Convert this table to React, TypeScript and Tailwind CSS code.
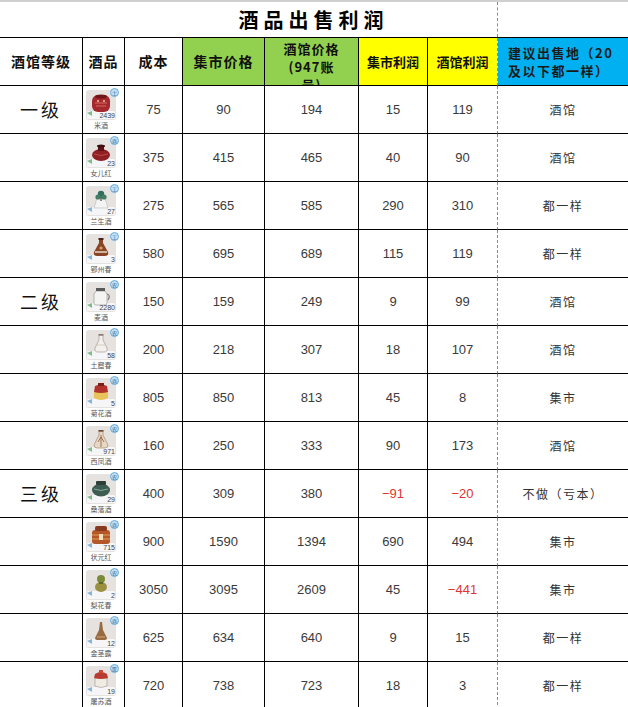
import React from 'react'

type Item = {
  grade?: string
  name: string
  count: string
  badge: string
  tab: 'g' | 'b'
  kind: string
  cost: string
  market: string
  tavern: string
  mProfit: string
  tProfit: string
  advice: string
}

const ROWS: Item[] = [
  { grade: '一级', name: '米酒', count: '2439', badge: '士', tab: 'g', kind: 'rice', cost: '75', market: '90', tavern: '194', mProfit: '15', tProfit: '119', advice: '酒馆' },
  { name: '女儿红', count: '23', badge: '商', tab: 'g', kind: 'pot', cost: '375', market: '415', tavern: '465', mProfit: '40', tProfit: '90', advice: '酒馆' },
  { name: '兰生酒', count: '27', badge: '工', tab: 'b', kind: 'tree', cost: '275', market: '565', tavern: '585', mProfit: '290', tProfit: '310', advice: '都一样' },
  { name: '郢州春', count: '3', badge: '工', tab: 'b', kind: 'vase', cost: '580', market: '695', tavern: '689', mProfit: '115', tProfit: '119', advice: '都一样' },
  { grade: '二级', name: '麦酒', count: '2280', badge: '农', tab: 'g', kind: 'jug', cost: '150', market: '159', tavern: '249', mProfit: '9', tProfit: '99', advice: '酒馆' },
  { name: '土窟春', count: '58', badge: '农', tab: 'g', kind: 'flask', cost: '200', market: '218', tavern: '307', mProfit: '18', tProfit: '107', advice: '酒馆' },
  { name: '菊花酒', count: '5', badge: '商', tab: 'b', kind: 'chrys', cost: '805', market: '850', tavern: '813', mProfit: '45', tProfit: '8', advice: '集市' },
  { name: '西凤酒', count: '971', badge: '农', tab: 'g', kind: 'xifeng', cost: '160', market: '250', tavern: '333', mProfit: '90', tProfit: '173', advice: '酒馆' },
  { grade: '三级', name: '桑落酒', count: '29', badge: '农', tab: 'g', kind: 'green', cost: '400', market: '309', tavern: '380', mProfit: '−91', tProfit: '−20', advice: '不做（亏本）' },
  { name: '状元红', count: '715', badge: '商', tab: 'b', kind: 'big', cost: '900', market: '1590', tavern: '1394', mProfit: '690', tProfit: '494', advice: '集市' },
  { name: '梨花春', count: '2', badge: '农', tab: 'b', kind: 'pear', cost: '3050', market: '3095', tavern: '2609', mProfit: '45', tProfit: '−441', advice: '集市' },
  { name: '金茎露', count: '12', badge: '商', tab: 'b', kind: 'thin', cost: '625', market: '634', tavern: '640', mProfit: '9', tProfit: '15', advice: '都一样' },
  { name: '屠苏酒', count: '19', badge: '医', tab: 'b', kind: 'tusu', cost: '720', market: '738', tavern: '723', mProfit: '18', tProfit: '3', advice: '都一样' },
]

const GRID = 'grid grid-cols-[83px_42px_58px_82px_94px_69px_70px_130px]'
const CJK = "font-['Noto_Sans_CJK_SC',sans-serif]"
const NUM = "font-['Liberation_Sans',Arial,sans-serif]"

function Drawing({ kind }: { kind: string }) {
  switch (kind) {
    case 'rice':
      return (
        <g>
          <rect x="6" y="5" width="18" height="17" rx="6" fill="#a5282c" />
          <ellipse cx="15" cy="6.5" rx="6" ry="2" fill="#6e1618" />
          <path d="M9 13 h12 M10 16 h10" stroke="#d86a5c" strokeWidth="1" />
          <circle cx="12" cy="11" r="1" fill="#f0c0a0" />
          <circle cx="18" cy="11" r="1" fill="#f0c0a0" />
        </g>
      )
    case 'pot':
      return (
        <g>
          <ellipse cx="15" cy="17" rx="9" ry="6" fill="#8e1f22" />
          <rect x="12" y="8" width="6" height="5" fill="#5a1416" />
          <ellipse cx="15" cy="8" rx="4" ry="1.5" fill="#3e0d0e" />
          <path d="M8 16 q7 3 14 0" stroke="#c04a40" strokeWidth="1" fill="none" />
        </g>
      )
    case 'tree':
      return (
        <g>
          <path d="M11 12 h8 l3 10 h-14z" fill="#f4f4f4" stroke="#b8b8b8" strokeWidth="0.6" />
          <circle cx="15" cy="8" r="3.2" fill="#2f6e5c" />
          <circle cx="12" cy="11" r="2.6" fill="#3f7f68" />
          <circle cx="18" cy="11" r="2.6" fill="#3f7f68" />
          <rect x="14.4" y="11" width="1.2" height="4" fill="#5a4030" />
        </g>
      )
    case 'vase':
      return (
        <g>
          <path d="M13 5 h4 v4 l5 9 q1 4 -3 4 h-8 q-4 0 -3 -4 l5 -9z" fill="#8a4526" />
          <rect x="12.5" y="4" width="5" height="2" fill="#4a2414" />
          <path d="M9 18 h12" stroke="#e8d8c8" strokeWidth="1.5" />
          <circle cx="15" cy="14" r="1.6" fill="#d8a060" />
        </g>
      )
    case 'jug':
      return (
        <g>
          <path d="M10 9 h9 l2 3 v9 q0 2 -2 2 h-9 q-2 0 -2 -2 v-9z" fill="#f4f4f2" stroke="#9a9a9a" strokeWidth="0.7" />
          <path d="M21 12 q4 1 1 6" stroke="#7a7a7a" strokeWidth="1.2" fill="none" />
          <rect x="10" y="6" width="9" height="3" fill="#5a5a5a" />
        </g>
      )
    case 'flask':
      return (
        <g>
          <path d="M13 5 h4 v5 l4 8 q1 4 -3 4 h-6 q-4 0 -3 -4 l4 -8z" fill="#f2efec" stroke="#a89a90" strokeWidth="0.7" />
          <path d="M11 15 h8" stroke="#c8b8a8" strokeWidth="0.6" />
          <rect x="12.5" y="4" width="5" height="1.6" fill="#8a7a70" />
        </g>
      )
    case 'chrys':
      return (
        <g>
          <path d="M8 14 q7 -3 14 0 v6 q-7 4 -14 0z" fill="#e8c35a" />
          <path d="M9 8 q6 -3 12 0 l1 6 q-7 2 -14 0z" fill="#b2332c" />
          <rect x="12" y="5" width="6" height="3" fill="#7a201c" />
        </g>
      )
    case 'xifeng':
      return (
        <g>
          <path d="M13 5 h4 v4 l5 10 q0 3 -3 3 h-8 q-3 0 -3 -3 l5 -10z" fill="#e7d8c6" stroke="#9a7a5a" strokeWidth="0.6" />
          <path d="M15 9 v12 M12 16 l3 -5 l3 5" stroke="#8a5a3a" strokeWidth="0.8" fill="none" />
          <rect x="12.5" y="4" width="5" height="1.6" fill="#6a4a30" />
        </g>
      )
    case 'green':
      return (
        <g>
          <ellipse cx="15" cy="16" rx="9" ry="6.5" fill="#3d5c52" />
          <rect x="10" y="7" width="10" height="4" rx="1" fill="#2c4038" />
          <path d="M8 15 q7 3 14 0" stroke="#8aa89a" strokeWidth="1" fill="none" />
        </g>
      )
    case 'big':
      return (
        <g>
          <rect x="6" y="8" width="18" height="14" rx="3" fill="#b6572a" />
          <rect x="9" y="4" width="12" height="5" rx="2" fill="#8a3a1c" />
          <path d="M6 13 h18 M6 17 h18" stroke="#e0a050" strokeWidth="1" />
          <rect x="13" y="12" width="4" height="6" fill="#f0e0c0" />
        </g>
      )
    case 'pear':
      return (
        <g>
          <circle cx="15" cy="9" r="4" fill="#7a8a36" />
          <ellipse cx="15" cy="17" rx="6" ry="5" fill="#9a9040" />
          <rect x="13" y="12" width="4" height="2" fill="#5a6a2a" />
        </g>
      )
    case 'thin':
      return (
        <g>
          <path d="M14 4 h2 l1 8 l4 8 q0 2 -2 2 h-8 q-2 0 -2 -2 l4 -8z" fill="#9a6a42" />
          <path d="M11 19 h8" stroke="#d8b890" strokeWidth="0.8" />
        </g>
      )
    default:
      return (
        <g>
          <path d="M9 12 q6 -3 12 0 v8 q-6 3 -12 0z" fill="#f0ece4" stroke="#a09888" strokeWidth="0.6" />
          <path d="M9 8 q6 -4 12 0 l1 4 q-7 2 -14 0z" fill="#b83a30" />
          <rect x="13" y="4" width="4" height="3" fill="#c84a3a" />
        </g>
      )
  }
}

function ItemIcon({ item }: { item: Item }) {
  return (
    <div className="flex w-[32px] flex-col items-center pt-[4px]">
      <div className="relative h-[30px] w-[30px] rounded-[3px] bg-[#e6e2e0]">
        <svg width="30" height="30" viewBox="0 0 30 30" className="block">
          <rect x="1" y="21" width="28" height="8" rx="1" fill="#f6f6f8" />
          <Drawing kind={item.kind} />
          <path d="M1 23 l5 -2 v5z" fill={item.tab === 'g' ? '#7dbf8c' : '#86b4da'} />
        </svg>
        <span className={`absolute bottom-[1px] right-[1px] text-[7px] leading-none text-[#444] ${NUM}`}>
          {item.count}
        </span>
        <span
          className={`absolute -right-[3px] -top-[2px] flex h-[9px] w-[9px] items-center justify-center rounded-full border border-[#6aaedc] bg-[#bfe0f4] text-[5px] leading-none text-[#2a6a9a] ${CJK}`}
        >
          {item.badge}
        </span>
      </div>
      <span className={`mt-[1px] whitespace-nowrap text-[7px] leading-[9px] text-[#555] ${CJK}`}>{item.name}</span>
    </div>
  )
}

function Num({ v, last = false }: { v: string; last?: boolean }) {
  const neg = v.startsWith('−')
  return (
    <div
      className={`flex h-[48px] items-center justify-center border-b border-r border-black text-[13px] ${NUM} ${
        neg ? 'text-[#e0352f]' : 'text-[#3a3a3a]'
      } ${last ? 'border-r-[#8a8a8a] [border-right-style:dashed]' : ''}`}
    >
      {v}
    </div>
  )
}

function HeadCell({ children, bg, extra = '' }: { children: React.ReactNode; bg: string; extra?: string }) {
  return (
    <div
      className={`flex h-[48px] items-center justify-center border-b border-r border-black font-bold text-[#111] ${CJK} ${bg} ${extra}`}
    >
      {children}
    </div>
  )
}

export default function App() {
  return (
    <div className="h-[707px] w-[628px] overflow-hidden bg-white">
      {/* title */}
      <div className="grid h-[37px] grid-cols-[498px_130px] border-t-2 border-[#d0d0d0]">
        <div className="flex items-center justify-center border-r border-[#8a8a8a] pl-[130px] [border-right-style:dashed]">
          <span className={`text-[20px] font-bold tracking-[5px] text-black ${CJK}`}>酒品出售利润</span>
        </div>
        <div />
      </div>

      {/* header */}
      <div className={`${GRID} border-t border-black`}>
        <HeadCell bg="bg-white" extra="text-[14px] tracking-[1px]">酒馆等级</HeadCell>
        <HeadCell bg="bg-white" extra="text-[14px] tracking-[1px]">酒品</HeadCell>
        <HeadCell bg="bg-white" extra="text-[14px] tracking-[1px]">成本</HeadCell>
        <HeadCell bg="bg-[#92d050]" extra="text-[14px] tracking-[1px]">集市价格</HeadCell>
        <div
          className={`flex h-[48px] flex-col items-center overflow-hidden border-b border-r border-black bg-[#92d050] pt-[2px] text-[13px] font-bold leading-[18px] tracking-[1px] text-[#111] ${CJK}`}
        >
          <span className="shrink-0">酒馆价格</span>
          <span className="shrink-0">(947账</span>
          <span className="shrink-0">号)</span>
        </div>
        <HeadCell bg="bg-[#ffff00]" extra="text-[13px]">集市利润</HeadCell>
        <HeadCell bg="bg-[#ffff00]" extra="text-[13px] border-r-[#8a8a8a] [border-right-style:dashed]">
          酒馆利润
        </HeadCell>
        <div
          className={`flex h-[48px] flex-col justify-center border-b border-black bg-[#00b0f0] pl-[10px] text-[13px] font-bold leading-[18px] tracking-[1.5px] text-[#1a1a1a] ${CJK}`}
        >
          <span>建议出售地（20</span>
          <span>及以下都一样）</span>
        </div>
      </div>

      {/* body */}
      {ROWS.map((r) => (
        <div key={r.name} className={GRID}>
          <div
            className={`flex h-[48px] items-center justify-center border-b border-r border-black text-[18px] tracking-[3px] text-[#111] ${CJK}`}
          >
            {r.grade}
          </div>
          <div className="h-[48px] overflow-hidden border-b border-r border-black pl-[2px]">
            <ItemIcon item={r} />
          </div>
          <Num v={r.cost} />
          <Num v={r.market} />
          <Num v={r.tavern} />
          <Num v={r.mProfit} />
          <Num v={r.tProfit} last />
          <div
            className={`flex h-[48px] items-center justify-center border-b border-black text-[12px] tracking-[1.5px] text-[#333] ${CJK}`}
          >
            {r.advice}
          </div>
        </div>
      ))}
    </div>
  )
}
